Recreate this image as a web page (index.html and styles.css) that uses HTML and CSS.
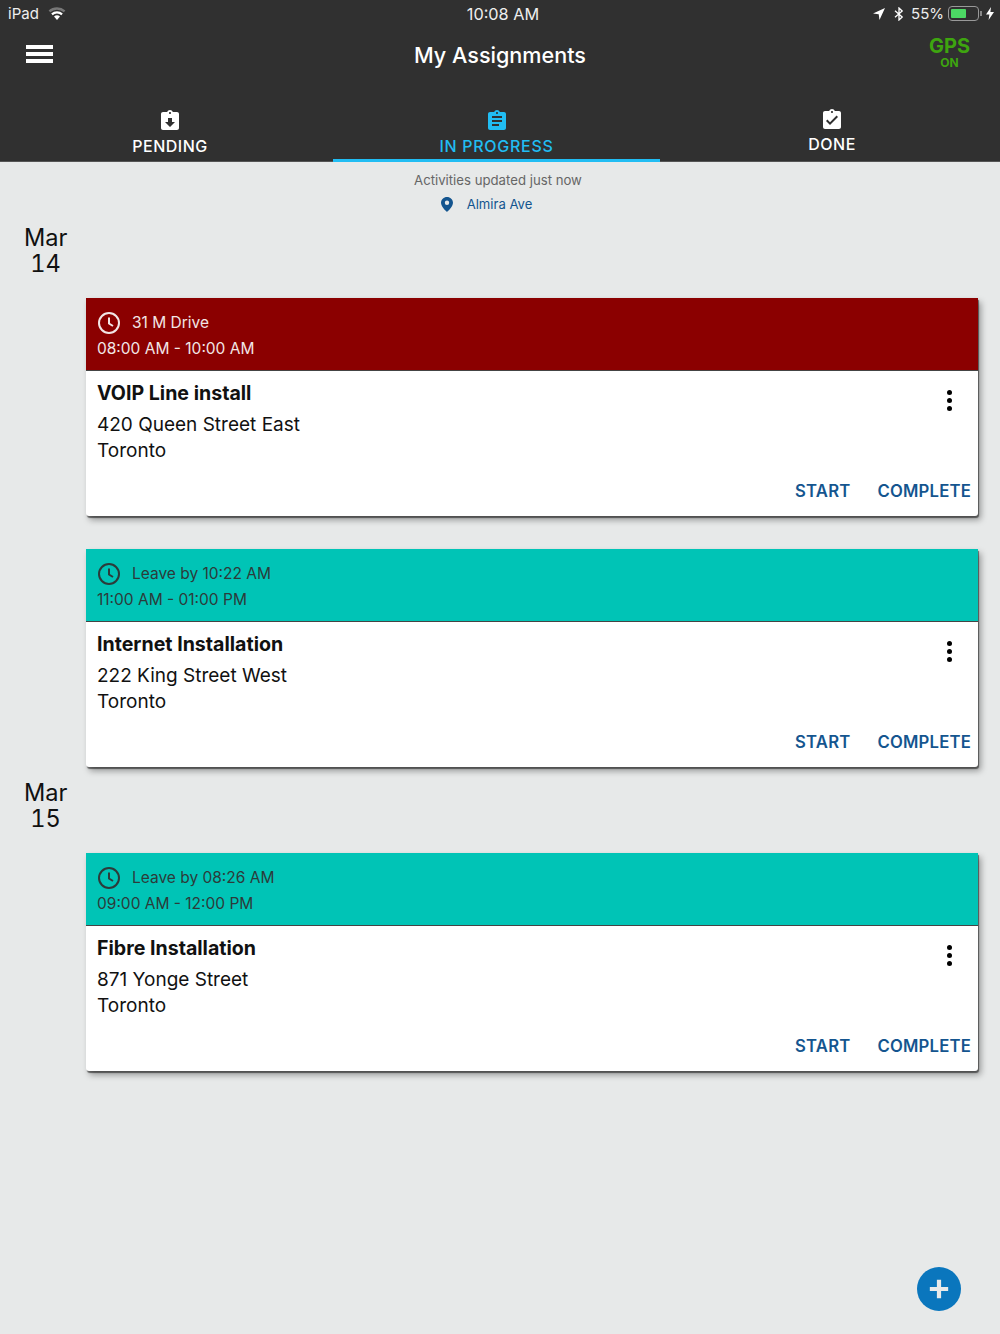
FILE: index.html
```html
<!DOCTYPE html>
<html lang="en">

<head>
    <meta charset="utf-8">
    <title>My Assignments</title>
    <link rel="stylesheet" href="styles.css">
</head>

<body>
    <header class="app-header">
        <div class="status-bar">
            <div class="status-left">
                <span>iPad</span>
                <svg class="wifi-icon" viewBox="0 0 18 13">
                    <path d="M9 13 L6 9.6 A4.6 4.6 0 0 1 12 9.6 Z" fill="#fff" />
                    <path d="M4.7 8.2 L3.2 6.5 A8.8 8.8 0 0 1 14.8 6.5 L13.3 8.2 A6.5 6.5 0 0 0 4.7 8.2 Z" fill="#fff" />
                    <path d="M2.2 5.3 L.6 3.5 A12.8 12.8 0 0 1 17.4 3.5 L15.8 5.3 A10.4 10.4 0 0 0 2.2 5.3 Z" fill="#777" />
                </svg>
            </div>
            <div class="status-time">10:08 AM</div>
            <div class="status-right">
                <svg class="arrow-icon" viewBox="0 0 13 13">
                    <path d="M13 0 L0 6 L6.2 6.8 L7 13 Z" fill="#fff" />
                </svg>
                <svg class="bt-icon" viewBox="0 0 10 14">
                    <path d="M1 3.8 L8.2 10 L5 13 V1 L8.2 4 L1 10.2" fill="none" stroke="#fff" stroke-width="1.3" />
                </svg>
                <span class="battery-pct">55%</span>
                <div class="battery">
                    <div class="battery-fill"></div>
                </div>
                <div class="battery-cap"></div>
                <svg class="bolt-icon" viewBox="0 0 8 13">
                    <path d="M5 0 L0 7.5 H3.4 L2.6 13 L8 5 H4.4 Z" fill="#fff" />
                </svg>
            </div>
        </div>

        <div class="title-bar">
            <div class="menu-icon">
                <span></span>
                <span></span>
                <span></span>
            </div>
            <h1 class="page-title">My Assignments</h1>
            <div class="gps">
                <div class="gps-name">GPS</div>
                <div class="gps-state">ON</div>
            </div>
        </div>

        <nav class="tabs">
            <div class="tab tab-pending">
                <svg class="tab-icon" viewBox="0 0 24 24">
                    <path d="M19 3h-4.18C14.4 1.84 13.3 1 12 1c-1.3 0-2.4.84-2.82 2H5c-1.1 0-2 .9-2 2v14c0 1.1.9 2 2 2h14c1.1 0 2-.9 2-2V5c0-1.1-.9-2-2-2zm-7 0c.55 0 1 .45 1 1s-.45 1-1 1-1-.45-1-1 .45-1 1-1zm0 15l-5-5h3V9h4v4h3l-5 5z" />
                </svg>
                <span>PENDING</span>
            </div>
            <div class="tab tab-active">
                <svg class="tab-icon" viewBox="0 0 24 24">
                    <path d="M19 3h-4.18C14.4 1.84 13.3 1 12 1c-1.3 0-2.4.84-2.82 2H5c-1.1 0-2 .9-2 2v14c0 1.1.9 2 2 2h14c1.1 0 2-.9 2-2V5c0-1.1-.9-2-2-2zm-7 0c.55 0 1 .45 1 1s-.45 1-1 1-1-.45-1-1 .45-1 1-1zm2 14H7v-2h7v2zm3-4H7v-2h10v2zm0-4H7V7h10v2z" />
                </svg>
                <span>IN PROGRESS</span>
            </div>
            <div class="tab tab-done">
                <svg class="tab-icon" viewBox="0 0 24 24">
                    <path d="M19 3h-4.18C14.4 1.84 13.3 1 12 1c-1.3 0-2.4.84-2.82 2H5c-1.1 0-2 .9-2 2v14c0 1.1.9 2 2 2h14c1.1 0 2-.9 2-2V5c0-1.1-.9-2-2-2zm-7 0c.55 0 1 .45 1 1s-.45 1-1 1-1-.45-1-1 .45-1 1-1zm-2 14l-4-4 1.41-1.41L10 14.17l6.59-6.59L18 9l-8 8z" />
                </svg>
                <span>DONE</span>
            </div>
        </nav>
    </header>

    <main class="content">
        <div class="sync-note">Activities updated just now</div>
        <div class="location">
            <svg class="pin-icon" viewBox="0 0 12 15">
                <path fill-rule="evenodd" d="M6 0C2.700 0 0 2.600 0 5.800 0 10 6 15 6 15s6-5 6-9.200C12 2.600 9.300 0 6 0zm0 8a2.200 2.200 0 1 1 0-4.400A2.200 2.200 0 0 1 6 8z" />
            </svg>
            <span>Almira Ave</span>
        </div>

        <div class="date-label date-first">Mar<br>14</div>

        <article class="card">
            <div class="card-head head-late">
                <div class="head-line">
                    <svg class="clock-icon" viewBox="0 0 24 24">
                        <circle cx="12" cy="12" r="10" />
                        <path d="M12 6.500V12.500L16 15" />
                    </svg>
                    <span>31 M Drive</span>
                </div>
                <div class="head-time">08:00 AM - 10:00 AM</div>
            </div>
            <div class="card-body">
                <div class="card-info">
                    <h2 class="card-title">VOIP Line install</h2>
                    <div class="card-address">420 Queen Street East<br>Toronto</div>
                </div>
                <div class="more-icon"><span></span><span></span><span></span></div>
            </div>
            <div class="card-actions">
                <a class="action">START</a>
                <a class="action">COMPLETE</a>
            </div>
        </article>

        <article class="card">
            <div class="card-head head-ok">
                <div class="head-line">
                    <svg class="clock-icon" viewBox="0 0 24 24">
                        <circle cx="12" cy="12" r="10" />
                        <path d="M12 6.500V12.500L16 15" />
                    </svg>
                    <span>Leave by 10:22 AM</span>
                </div>
                <div class="head-time">11:00 AM - 01:00 PM</div>
            </div>
            <div class="card-body">
                <div class="card-info">
                    <h2 class="card-title">Internet Installation</h2>
                    <div class="card-address">222 King Street West<br>Toronto</div>
                </div>
                <div class="more-icon"><span></span><span></span><span></span></div>
            </div>
            <div class="card-actions">
                <a class="action">START</a>
                <a class="action">COMPLETE</a>
            </div>
        </article>

        <div class="date-label date-next">Mar<br>15</div>

        <article class="card">
            <div class="card-head head-ok">
                <div class="head-line">
                    <svg class="clock-icon" viewBox="0 0 24 24">
                        <circle cx="12" cy="12" r="10" />
                        <path d="M12 6.500V12.500L16 15" />
                    </svg>
                    <span>Leave by 08:26 AM</span>
                </div>
                <div class="head-time">09:00 AM - 12:00 PM</div>
            </div>
            <div class="card-body">
                <div class="card-info">
                    <h2 class="card-title">Fibre Installation</h2>
                    <div class="card-address">871 Yonge Street<br>Toronto</div>
                </div>
                <div class="more-icon"><span></span><span></span><span></span></div>
            </div>
            <div class="card-actions">
                <a class="action">START</a>
                <a class="action">COMPLETE</a>
            </div>
        </article>
    </main>

    <button class="fab">
        <svg viewBox="0 0 24 24">
            <path d="M12 2V22M2 12H22" stroke="#e8eaea" stroke-width="4.600" fill="none" />
        </svg>
    </button>
</body>

</html>
```

FILE: styles.css
```css
html,
body {
    margin: 0;
    padding: 0;
    height: 1334px;
    overflow: hidden;
}

body {
    position: relative;
    font-family: Inter, "Liberation Sans", sans-serif;
    background-color: #e7e9e9;
    color: #111;
}

.app-header {
    height: 161px;
    background-color: #303030;
    border-bottom: 1px solid #555;
    color: #fff;
}

/* status bar */

.status-bar {
    display: flex;
    justify-content: space-between;
    align-items: center;
    height: 27px;
    padding: 0 6px 0 8px;
    font-size: 15px;
    color: #eee;
}

.status-left,
.status-right {
    display: flex;
    align-items: center;
    width: 200px;
}

.status-right {
    justify-content: flex-end;
}

.wifi-icon {
    width: 18px;
    height: 13px;
    margin-left: 9px;
}

.status-time {
    margin-left: 4px;
    font-size: 16.300px;
}

.arrow-icon {
    width: 12px;
    height: 12px;
    margin-right: 9px;
}

.bt-icon {
    width: 10px;
    height: 14px;
    margin-right: 7px;
}

.battery-pct {
    margin-right: 4px;
}

.battery {
    box-sizing: border-box;
    width: 31px;
    height: 15px;
    padding: 2px;
    border: 1px solid #999;
    border-radius: 4px;
}

.battery-fill {
    width: 15px;
    height: 100%;
    border-radius: 1px;
    background-color: #4cd964;
}

.battery-cap {
    width: 2px;
    height: 5px;
    margin: 0 4px 0 1px;
    background-color: #888;
}

.bolt-icon {
    width: 8px;
    height: 13px;
}

/* title */

.title-bar {
    position: relative;
    display: flex;
    justify-content: center;
    height: 80px;
}

.menu-icon {
    position: absolute;
    left: 26px;
    top: 18px;
    display: flex;
    flex-direction: column;
    gap: 3px;
}

.menu-icon span {
    display: block;
    width: 27px;
    height: 4px;
    background-color: #fff;
}

.page-title {
    margin: 14px 0 0;
    font-size: 21.600px;
    line-height: 28px;
    font-weight: 500;
}

.gps {
    position: absolute;
    right: 30px;
    top: 9px;
    text-align: center;
    color: #3ea50f;
    font-weight: 700;
}

.gps-name {
    font-size: 20px;
    line-height: 21px;
}

.gps-state {
    font-size: 12px;
    line-height: 12px;
}

/* tabs */

.tabs {
    display: grid;
    grid-template-columns: 333px 327px 340px;
    height: 54px;
}

.tab {
    box-sizing: border-box;
    display: flex;
    flex-direction: column;
    align-items: center;
    height: 55px;
    padding-top: 2px;
    font-size: 16px;
    line-height: 22px;
    font-weight: 500;
    letter-spacing: 0.5px;
}

.tab-pending {
    padding-left: 7px;
}

.tab-done {
    padding-left: 4px;
    padding-top: 1px;
}

.tab-icon {
    width: 24px;
    height: 24px;
    flex-shrink: 0;
    fill: #fff;
}

.tab span {
    margin-top: 2px;
}

.tab-done span {
    margin-top: 1px;
}

.tab-active {
    color: #21bdf3;
    border-bottom: 3px solid #21bdf3;
    letter-spacing: 0.7px;
}

.tab-active .tab-icon {
    fill: #21bdf3;
}

/* content */

.content {
    padding: 0 22px 0 24px;
}

.sync-note {
    padding-top: 10px;
    margin-left: -6px;
    text-align: center;
    font-size: 13.200px;
    line-height: 16px;
    color: #666;
}

.location {
    display: flex;
    justify-content: center;
    align-items: center;
    height: 16px;
    margin-top: 8px;
    margin-left: -29px;
    font-size: 13.100px;
    color: #14558f;
}

.pin-icon {
    width: 12px;
    height: 15px;
    margin-right: 14px;
    fill: #14558f;
}

.date-label {
    width: 43px;
    font-size: 23.600px;
    line-height: 26px;
    font-weight: 400;
    text-align: center;
    font-variant-numeric: tabular-nums;
}

.date-first {
    margin-top: 13px;
    margin-bottom: 21px;
}

.date-next {
    margin-bottom: 21px;
}

/* cards */

.card {
    margin: 0 0 34px 62px;
    height: 218px;
    background-color: #fff;
    border-radius: 0 0 3px 3px;
    box-shadow: 1px 2px 1px rgba(0, 0, 0, 0.5), 3px 4px 6px rgba(0, 0, 0, 0.35);
}

.date-first + .card {
    margin-bottom: 33px;
}

.card + .date-next {
    margin-top: -21px;
}

.card-head {
    box-sizing: border-box;
    height: 73px;
    padding: 13px 11px 0;
    font-size: 15.500px;
    line-height: 26px;
    border-bottom: 1px solid #444;
}

.head-late {
    background-color: #8b0000;
    color: #f2e6e6;
}

.head-ok {
    background-color: #00c4b6;
    color: #2c3b3a;
}

.head-line {
    display: flex;
    align-items: center;
    height: 24px;
}

.head-time {
    margin-top: 1px;
}

.clock-icon {
    width: 24px;
    height: 24px;
    margin-right: 11px;
    fill: none;
    stroke: currentColor;
    stroke-width: 2;
}

.card-body {
    display: flex;
    justify-content: space-between;
    height: 102px;
    padding: 0 26px 0 11px;
}

.card-title {
    margin: 9px 0 0;
    font-size: 19.600px;
    line-height: 26px;
    font-weight: 700;
}

.card-address {
    margin-top: 6px;
    font-size: 19px;
    line-height: 26px;
}

.more-icon {
    display: flex;
    flex-direction: column;
    gap: 3px;
    padding-top: 19px;
}

.more-icon span {
    display: block;
    width: 5px;
    height: 5px;
    border-radius: 50%;
    background-color: #000;
}

.card-actions {
    display: flex;
    justify-content: flex-end;
    gap: 27px;
    padding: 7px 7px 0 0;
}

.action {
    font-size: 16.700px;
    line-height: 22px;
    font-weight: 600;
    color: #14558f;
    letter-spacing: 0.2px;
}

.fab {
    position: absolute;
    left: 917px;
    top: 1267px;
    width: 44px;
    height: 44px;
    padding: 11px;
    border: none;
    border-radius: 50%;
    background-color: #0a76bd;
}

.fab svg {
    display: block;
    width: 22px;
    height: 22px;
}
```
